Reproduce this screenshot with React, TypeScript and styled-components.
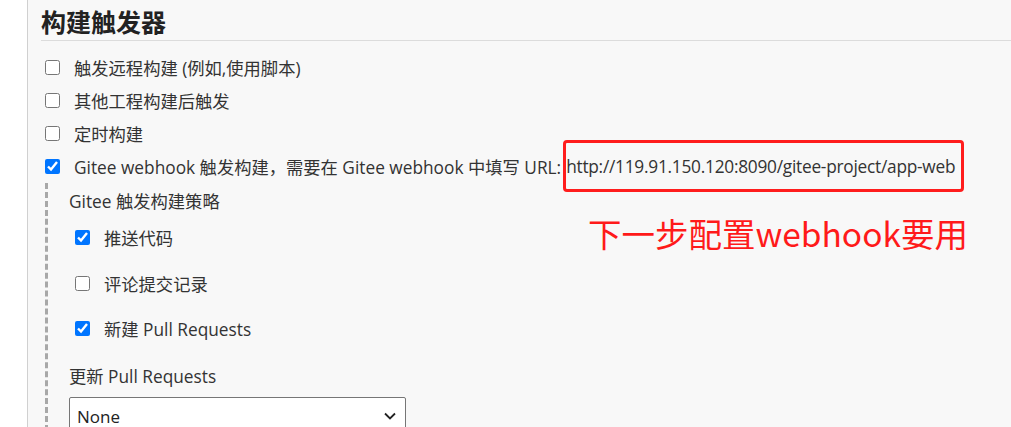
import React from "react";
import styled, { createGlobalStyle } from "styled-components";

const Global = createGlobalStyle`
  html, body { margin: 0; padding: 0; background: #ffffff; }
  body { font-family: "Segoe UI", "Open Sans", "Noto Sans CJK SC", sans-serif; color: #333; }
  * { box-sizing: border-box; }
`;

const Page = styled.div`
  display: flex;
  width: 1011px;
  height: 427px;
  overflow: hidden;
`;

const Gutter = styled.div`
  width: 28px;
  flex: none;
  background: #ffffff;
  border-right: 1px solid #d0d0d0;
`;

const Main = styled.div`
  position: relative;
  flex: 1;
  background: #f8f8f8;
  padding-left: 13px;
`;

const Heading = styled.h2`
  margin: 0;
  height: 41px;
  padding-top: 5px;
  font-family: "Noto Sans CJK SC", sans-serif;
  font-size: 25px;
  font-weight: 700;
  line-height: 32px;
  color: #222;
  border-bottom: 1px solid #dcdcdc;
`;

const List = styled.div`
  display: flex;
  flex-direction: column;
  padding-top: 10px;
`;

const Row = styled.label<{ $h: number; $indent?: number }>`
  display: flex;
  align-items: center;
  height: ${(p) => p.$h}px;
  padding-left: ${(p) => p.$indent ?? 4}px;
  font-size: 17.3px;
  color: #333;
  white-space: nowrap;
`;

const Url = styled.span`
  margin-left: 5px;
  letter-spacing: -0.25px;
`;

const Box = styled.input.attrs({ type: "checkbox", readOnly: true })`
  width: 15px;
  height: 15px;
  margin: 0 14px 0 0;
  accent-color: #0075ff;
`;

const Nested = styled.div`
  margin-left: 4px;
  padding-left: 21px;
  border-left: 3px dashed #a8a8a8;
  display: flex;
  flex-direction: column;
`;

const Caption = styled.div<{ $h: number; $mt?: number }>`
  display: flex;
  align-items: center;
  height: ${(p) => p.$h}px;
  margin-top: ${(p) => p.$mt ?? 0}px;
  font-size: 17.3px;
  color: #333;
  white-space: nowrap;
`;

const Select = styled.div`
  margin-top: 2px;
  width: 337px;
  height: 34px;
  border: 1px solid #767676;
  border-radius: 2px;
  background: #fff;
  display: flex;
  align-items: center;
  justify-content: space-between;
  padding: 4px 8px 0 7px;
  font-size: 17px;
  color: #222;
`;

const RedBox = styled.div`
  position: absolute;
  left: 535px;
  top: 140px;
  width: 401px;
  height: 52px;
  border: 3px solid #ff1d1d;
  border-radius: 4px;
  pointer-events: none;
`;

const Note = styled.div`
  position: absolute;
  left: 560px;
  top: 211px;
  font-family: "Noto Sans CJK SC", sans-serif;
  font-size: 33.5px;
  line-height: 44px;
  color: #ff1a1a;
  white-space: nowrap;
`;

export default function App() {
  return (
    <>
      <Global />
      <Page>
        <Gutter />
        <Main>
          <Heading>构建触发器</Heading>
          <List>
            <Row $h={33}>
              <Box checked={false} />
              触发远程构建 (例如,使用脚本)
            </Row>
            <Row $h={33}>
              <Box checked={false} />
              其他工程构建后触发
            </Row>
            <Row $h={33}>
              <Box checked={false} />
              定时构建
            </Row>
            <Row $h={33}>
              <Box checked />
              Gitee webhook 触发构建，需要在 Gitee webhook 中填写 URL:
              <Url>http://119.91.150.120:8090/gitee-project/app-web</Url>
            </Row>
            <Nested>
              <Caption $h={34}>Gitee 触发构建策略</Caption>
              <Row $h={40} $indent={6}>
                <Box checked />
                推送代码
              </Row>
              <Row $h={52} $indent={6}>
                <Box checked={false} />
                评论提交记录
              </Row>
              <Row $h={38} $indent={6}>
                <Box checked />
                新建 Pull Requests
              </Row>
              <Caption $h={40} $mt={8}>更新 Pull Requests</Caption>
              <Select>
                None
                <svg width="14" height="14" viewBox="0 0 14 14">
                  <path d="M2 4.5 L7 9.5 L12 4.5" fill="none" stroke="#222" strokeWidth="1.8" />
                </svg>
              </Select>
            </Nested>
          </List>
          <RedBox />
          <Note>下一步配置webhook要用</Note>
        </Main>
      </Page>
    </>
  );
}
